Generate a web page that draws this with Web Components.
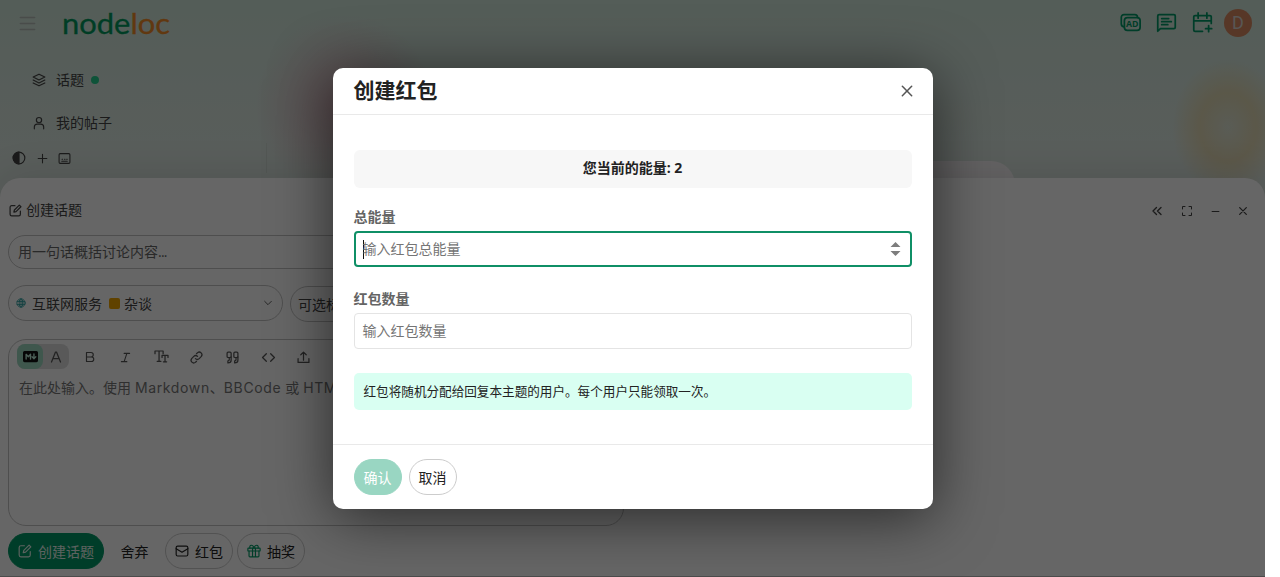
<!DOCTYPE html>
<html lang="zh-CN">
<head>
<meta charset="utf-8">
<title>NodeLoc</title>
<style>
    body {
        margin: 0;
        background: #fff;
        color: #222;
        font-family: "Open Sans", "Noto Sans CJK SC", sans-serif;
        font-size: 14px;
        line-height: 20px;
        overflow: hidden;
    }
</style>
</head>
<body>
<forum-app></forum-app>

<script>
const ICONS = {
    menu: '<path d="M3 4.5h18M3 12h18M3 19.5h18"/>',
    layers: '<path d="m12 2 10 5-10 5L2 7zM2 12l10 5 10-5M2 17l10 5 10-5"/>',
    user: '<circle cx="12" cy="7" r="4.5"/><path d="M4 22v-3a5 5 0 0 1 5-5h6a5 5 0 0 1 5 5v3"/>',
    contrast: '<circle cx="12" cy="12" r="10"/><path d="M12 2a10 10 0 0 0 0 20z" fill="currentColor"/>',
    plus: '<path d="M12 4v16M4 12h16"/>',
    keyboard: '<rect x="2" y="3" width="20" height="18" rx="2"/><path d="M7 17h10M7.500 13.500h1M12 13.500h1M16 13.500h1"/>',
    ad: '<path d="M4.5 17A3.500 3.500 0 0 1 1.500 13.500V6a3 3 0 0 1 3-3H17a3 3 0 0 1 3 3"/><rect x="5" y="6.500" width="18" height="14.500" rx="3.500"/><text x="14" y="17.300" text-anchor="middle" font-size="10" font-weight="700" font-family="Open Sans" fill="currentColor" stroke="none">AD</text>',
    chat: '<path d="M2 22V4.500A1.500 1.500 0 0 1 3.500 3h17A1.500 1.500 0 0 1 22 4.500v13a1.500 1.500 0 0 1-1.500 1.500H5zM6.500 7.500h8M6.500 11h11M6.500 14.500h7"/>',
    calendar: '<path d="M12 22H3.500A1.500 1.500 0 0 1 2 20.500v-15A1.500 1.500 0 0 1 3.500 4h17A1.500 1.500 0 0 1 22 5.500V13M2 10h20M7 1v6M17 1v6M19 15.500v7M15.500 19h7"/>',
    edit: '<path d="M11 3H5a3 3 0 0 0-3 3v13a3 3 0 0 0 3 3h13a3 3 0 0 0 3-3v-6M9 15l1-4L19 2l3 3-9 9z"/>',
    chevrons: '<path d="m11 5-7 7 7 7M20 5l-7 7 7 7"/>',
    expand: '<path d="M3 8V3h5M16 3h5v5M21 16v5h-5M8 21H3v-5"/>',
    minus: '<path d="M3 12h18"/>',
    close: '<path d="m4 4 16 16M20 4 4 20"/>',
    down: '<path d="m4 8 8 8 8-8"/>',
    globe: '<circle cx="12" cy="12" r="10"/><ellipse cx="12" cy="12" rx="4.500" ry="10"/><path d="M3 8.500h18M3 15.500h18M12 2v20"/>',
    markdown: '<rect x="1" y="4" width="22" height="16" rx="1.500" fill="currentColor"/><path stroke="var(--cut)" stroke-width="2.200" d="M5 16V8.500l3.500 4 3.500-4V16M17.500 8v7M14.500 12.500l3 3 3-3"/>',
    letter: '<path d="m3 22 8-20h2l8 20M6 15h12"/>',
    bold: '<path d="M5 3h9a4.500 4.500 0 0 1 0 9H5zM5 12h10a4.500 4.500 0 0 1 0 9H5z"/>',
    italic: '<path d="M9 3h12M3 21h12M15 3 9 21"/>',
    heading: '<path d="M0 5V0h15v5M7.500 0v19M4 19h7M13 12V8h11v4M18.500 8v12M15.500 20h6"/>',
    link: '<path d="M10 14a5 5 0 0 0 7 0l4-4a5 5 0 0 0-7-7l-2 2M14 10a5 5 0 0 0-7 0l-4 4a5 5 0 0 0 7 7l2-2"/>',
    quote: '<rect x="2" y="2" width="7.500" height="10" rx="2"/><rect x="14.500" y="2" width="7.500" height="10" rx="2"/><path d="M9.500 11v6q0 5-6 5v-4q2.500 0 2.500-2v-4M22 11v6q0 5-6 5v-4q2.500 0 2.500-2v-4"/>',
    code: '<path d="m8 5-7 7 7 7M16 5l7 7-7 7"/>',
    upload: '<path d="M12 17V2M7 7l5-5 5 5M2 14v7h20v-7"/>',
    mail: '<rect x="2" y="3.500" width="20" height="17" rx="2.500"/><path d="m2 8 10 6 10-6"/>',
    gift: '<rect x="1.500" y="7" width="21" height="5" rx="1"/><path d="M3.500 12v8.500A1.500 1.500 0 0 0 5 22h14a1.500 1.500 0 0 0 1.500-1.500V12M9.500 7v15M14.500 7v15M12 7C10 0 3.500 1 5 7M12 7c2-7 8.500-6 7 0"/>',
};

class NlIcon extends HTMLElement {
    constructor() {
        super();
        this.attachShadow({ mode: 'open' });
    }

    connectedCallback() {
        const size = this.getAttribute('size') || 14;
        this.shadowRoot.innerHTML = `
            <style>
                :host { display: block; flex: none; width: ${size}px; height: ${size}px; }
                svg { display: block; overflow: visible; }
            </style>
            <svg width="${size}" height="${size}" viewBox="0 0 24 24" fill="none" stroke="currentColor"
                stroke-width="${this.getAttribute('weight') || 2}" stroke-linecap="round" stroke-linejoin="round">
                ${ICONS[this.getAttribute('name')]}
            </svg>
        `;
    }
}

class SiteHeader extends HTMLElement {
    constructor() {
        super();
        this.attachShadow({ mode: 'open' }).innerHTML = `
            <style>
                :host {
                    display: flex;
                    align-items: center;
                    height: 46px;
                    padding: 0 9px 0 18px;
                    color: #009a66;
                }
                .menu { color: #b6bdb9; }
                .logo { margin-left: 25px; flex: 1; height: 46px; }
                .logo svg { display: block; }
                .cell { width: 36px; display: grid; place-items: center; margin-top: -1px; }
                .cell:last-child { margin-top: 0; }
                .avatar {
                    width: 28px;
                    height: 28px;
                    border-radius: 50%;
                    background: #d98a62;
                    color: #dcd6d2;
                    font: 18px/28px Roboto, sans-serif;
                    text-align: center;
                }
            </style>
            <nl-icon class="menu" name="menu" size="19" weight="2"></nl-icon>
            <div class="logo">
                <svg width="110" height="46">
                    <text y="33.500" font-family="Lato" font-size="29" stroke-width=".3" textLength="108" lengthAdjust="spacingAndGlyphs"><tspan fill="#009a5c" stroke="#009a5c">node</tspan><tspan fill="#f28c28" stroke="#f28c28">loc</tspan></text>
                </svg>
            </div>
            <div class="cell"><nl-icon name="ad" size="21"></nl-icon></div>
            <div class="cell"><nl-icon name="chat" size="21"></nl-icon></div>
            <div class="cell"><nl-icon name="calendar" size="21"></nl-icon></div>
            <div class="cell"><span class="avatar">D</span></div>
        `;
    }
}

class SideNav extends HTMLElement {
    constructor() {
        super();
        this.attachShadow({ mode: 'open' }).innerHTML = `
            <style>
                :host { display: block; width: 267px; padding-top: 12px; color: #444; }
                .row { display: flex; align-items: center; gap: 10px; height: 43px; padding-left: 32px; }
                .row nl-icon { margin-top: 1px; }
                .dot { width: 8px; height: 8px; border-radius: 50%; background: #23cf8e; margin-left: -3px; }
                .tools {
                    display: flex;
                    align-items: center;
                    gap: 9.500px;
                    height: 30px;
                    margin-top: -1px;
                    padding: 0 0 0 12px;
                    border-right: 1px solid #d2dcd6;
                }
            </style>
            <div class="row"><nl-icon name="layers"></nl-icon>话题<i class="dot"></i></div>
            <div class="row"><nl-icon name="user"></nl-icon>我的帖子</div>
            <div class="tools">
                <nl-icon name="contrast"></nl-icon>
                <nl-icon name="plus" size="13"></nl-icon>
                <nl-icon name="keyboard" size="13"></nl-icon>
            </div>
        `;
    }
}

class PillButton extends HTMLElement {
    constructor() {
        super();
        this.attachShadow({ mode: 'open' }).innerHTML = `
            <style>
                :host {
                    display: inline-flex;
                    align-items: center;
                    justify-content: center;
                    gap: 6px;
                    box-sizing: border-box;
                    height: 36px;
                    padding: 2px 9px 0;
                    border: 1px solid #ccc;
                    border-radius: 18px;
                    white-space: nowrap;
                }
                :host([kind="primary"]) { background: #009a66; border-color: #009a66; color: #e8f5ef; }
                :host([kind="flat"]) { border-color: transparent; }
                :host([disabled]) { background: #99d6c2; border-color: #99d6c2; color: #fff; }
                ::slotted(nl-icon) { margin-top: -3px; }
            </style>
            <slot></slot>
        `;
    }
}

class EditorToolbar extends HTMLElement {
    constructor() {
        super();
        this.attachShadow({ mode: 'open' }).innerHTML = `
            <style>
                :host { display: flex; align-items: center; height: 25px; color: #555; }
                .toggle { display: flex; width: 52px; height: 25px; border-radius: 8px; background: #dedede; margin-right: 3px; }
                .toggle div { display: grid; place-items: center; width: 26px; }
                .toggle .on { background: #9dd9c1; border-radius: 8px; color: #111; --cut: #bdeeda; }
                .cell { display: grid; place-items: center; width: 35.700px; padding-top: 1px; }
            </style>
            <div class="toggle">
                <div class="on"><nl-icon name="markdown" size="15"></nl-icon></div>
                <div><nl-icon name="letter" size="12" weight="2.5"></nl-icon></div>
            </div>
            ${['bold', 'italic', 'heading', 'link', 'quote', 'code', 'upload'].map((name) => `
                <div class="cell"><nl-icon name="${name}" weight="2.3" size="${{ bold: 12, italic: 11 }[name] || 13}"></nl-icon></div>
            `).join('')}
        `;
    }
}

class TopicComposer extends HTMLElement {
    constructor() {
        super();
        this.attachShadow({ mode: 'open' }).innerHTML = `
            <style>
                :host {
                    display: flex;
                    flex-direction: column;
                    box-sizing: border-box;
                    padding: 0 8px;
                    border-radius: 20px 20px 0 0;
                    border-bottom: 1px solid #bbb;
                    background: #fff;
                    box-shadow: 0 -1px 40px rgba(0, 0, 0, .12);
                    color: #444;
                }
                .bar { display: flex; align-items: center; height: 57px; }
                .title { display: flex; align-items: center; gap: 4px; flex: 1; padding: 7px 0 0 1px; }
                .controls { display: flex; padding: 9px 0 0; }
                .controls div { width: 28px; display: grid; place-items: center; }
                .controls div:first-child { width: 32px; }
                .field { box-sizing: border-box; border: 1px solid #c4c4c4; border-radius: 18px; }
                .subject { width: 616px; height: 34px; padding: 6px 9px; color: #666; }
                .subject span { letter-spacing: -.8px; }
                .selects { display: flex; gap: 7px; margin-top: 16px; height: 37px; width: 616px; }
                .category { display: flex; align-items: center; width: 275px; height: 36px; padding: 1px 9px 0 7px; }
                .category .text { margin: 0 7px 0 6px; }
                .square { width: 11px; height: 11px; border-radius: 2px; background: #f0a500; margin-right: 4px; }
                .category .down { margin-left: auto; margin-top: -2px; }
                .globe { color: #2a9f9f; margin-top: -2px; }
                .tags { flex: 1; height: 36px; margin-top: 1px; padding: 8px 7px; }
                .editor { width: 616px; height: 187px; margin-top: 17px; padding: 4px 8px; }
                .hint { margin: 9px 2px; color: #777; white-space: nowrap; font-family: Inter, "Noto Sans CJK SC", sans-serif; }
                .hint span { letter-spacing: .63px; }
                .actions { display: flex; margin-top: 7px; gap: 4px; color: #222; }
                .actions .discard { width: 53px; }
                .gift { color: #009a66; }
            </style>
            <div class="bar">
                <div class="title"><nl-icon name="edit" size="13" weight="2.3"></nl-icon>创建话题</div>
                <div class="controls">
                    <div><nl-icon name="chevrons" size="12" weight="2.7"></nl-icon></div>
                    <div><nl-icon name="expand" size="12"></nl-icon></div>
                    <div><nl-icon name="minus" size="9" weight="3"></nl-icon></div>
                    <div><nl-icon name="close" size="10" weight="3"></nl-icon></div>
                </div>
            </div>
            <div class="field subject">用一句话概括讨论内容<span>...</span></div>
            <div class="selects">
                <div class="field category">
                    <nl-icon class="globe" name="globe" size="10"></nl-icon><span class="text">互联网服务</span>
                    <i class="square"></i>杂谈
                    <nl-icon class="down" name="down" size="10"></nl-icon>
                </div>
                <div class="field tags">可选标签</div>
            </div>
            <div class="field editor">
                <editor-toolbar></editor-toolbar>
                <div class="hint">在此处输入。使用 <span>Markdown</span>、<span>BBCode</span> 或 <span>HTML</span></div>
            </div>
            <div class="actions">
                <pill-button kind="primary"><nl-icon name="edit"></nl-icon>创建话题</pill-button>
                <pill-button kind="flat" class="discard">舍弃</pill-button>
                <pill-button><nl-icon name="mail"></nl-icon>红包</pill-button>
                <pill-button><nl-icon class="gift" name="gift"></nl-icon>抽奖</pill-button>
            </div>
        `;
    }
}

class NumberField extends HTMLElement {
    constructor() {
        super();
        this.attachShadow({ mode: 'open' });
    }

    connectedCallback() {
        this.shadowRoot.innerHTML = `
            <style>
                :host { display: block; }
                label { display: block; height: 24px; line-height: 20px; font-weight: 700; color: #646464; }
                .box {
                    display: flex;
                    align-items: center;
                    box-sizing: border-box;
                    height: 36px;
                    padding: 0 10px 0 8px;
                    border: 1px solid #e4e4e4;
                    border-radius: 4px;
                    color: #757575;
                }
                .box span { flex: 1; }
                svg { display: none; }
                :host([focused]) .box { border: 2px solid #0f8f66; padding: 0 9px 0 7px; }
                :host([focused]) .box::before { content: ""; width: 1px; height: 19px; margin-right: -1px; background: #111; }
                :host([focused]) svg { display: block; }
            </style>
            <label>${this.getAttribute('label')}</label>
            <div class="box">
                <span>${this.getAttribute('placeholder')}</span>
                <svg width="11" height="14"><path d="M.5 5 5.500 0l5 5zM.5 9l5 5 5-5z" fill="#7d7d7d"/></svg>
            </div>
        `;
    }
}

class ModalDialog extends HTMLElement {
    constructor() {
        super();
        this.attachShadow({ mode: 'open' }).innerHTML = `
            <style>
                :host {
                    display: block;
                    width: 600px;
                    height: 441px;
                    border-radius: 10px;
                    background: #fff;
                    box-shadow: 0 8px 60px rgba(0, 0, 0, .6);
                }
                header {
                    display: flex;
                    align-items: center;
                    justify-content: space-between;
                    box-sizing: border-box;
                    height: 47px;
                    padding: 0 19px 0 21px;
                    border-bottom: 1px solid #e9e9e9;
                }
                h1 { margin: -3px 0 0; font-size: 21px; line-height: 28px; font-weight: 700; }
                header nl-icon { color: #555; }
                .body { height: 329px; box-sizing: border-box; padding: 35px 21px 0; }
                footer { display: flex; gap: 7px; padding: 14px 21px 0; border-top: 1px solid #e9e9e9; }
            </style>
            <header><h1><slot name="title"></slot></h1><nl-icon name="close" weight="2.6" size="14"></nl-icon></header>
            <div class="body"><slot></slot></div>
            <footer><slot name="footer"></slot></footer>
        `;
    }
}

class ForumApp extends HTMLElement {
    constructor() {
        super();
        this.attachShadow({ mode: 'open' }).innerHTML = `
            <style>
                :host {
                    display: block;
                    position: relative;
                    width: 1265px;
                    height: 577px;
                    overflow: hidden;
                    background:
                        radial-gradient(circle at 345px 105px, rgba(230, 150, 170, .55), rgba(225, 165, 180, .35) 45px, transparent 90px),
                        radial-gradient(ellipse 56px 68px at 1228px 127px, rgba(235, 215, 165, .2), rgba(235, 205, 140, .5) 50%, transparent),
                        linear-gradient(#d2e8dc, #dfeae4 160px, #dfe8e3);
                }
                .page { display: flex; }
                .content {
                    flex: none;
                    width: 648px;
                    height: 400px;
                    margin: 115px 0 0 100px;
                    border-radius: 24px;
                    background: #fbf8fa;
                }
                topic-composer { position: absolute; left: 0; right: 0; bottom: 0; height: 399px; }
                .backdrop {
                    position: absolute;
                    inset: 0;
                    display: flex;
                    justify-content: center;
                    align-items: flex-start;
                    padding-top: 68px;
                    background: rgba(0, 0, 0, .6);
                }
                .balance {
                    height: 38px;
                    margin-bottom: 19px;
                    border-radius: 6px;
                    background: #f7f7f7;
                    font-weight: 700;
                    line-height: 35px;
                    text-align: center;
                }
                number-field + number-field { margin-top: 22px; }
                .notice {
                    height: 37px;
                    margin-top: 24px;
                    padding-left: 10px;
                    border-radius: 5px;
                    background: #d9fff2;
                    font-size: 12.600px;
                    line-height: 37px;
                }
            </style>
            <site-header></site-header>
            <div class="page"><side-nav></side-nav><div class="content"></div></div>
            <topic-composer></topic-composer>
            <div class="backdrop">
                <modal-dialog>
                    <span slot="title">创建红包</span>
                    <div class="balance">您当前的能量: 2</div>
                    <number-field focused label="总能量" placeholder="输入红包总能量"></number-field>
                    <number-field label="红包数量" placeholder="输入红包数量"></number-field>
                    <div class="notice">红包将随机分配给回复本主题的用户。每个用户只能领取一次。</div>
                    <pill-button slot="footer" disabled>确认</pill-button>
                    <pill-button slot="footer">取消</pill-button>
                </modal-dialog>
            </div>
        `;
    }
}

customElements.define('nl-icon', NlIcon);
customElements.define('site-header', SiteHeader);
customElements.define('side-nav', SideNav);
customElements.define('pill-button', PillButton);
customElements.define('editor-toolbar', EditorToolbar);
customElements.define('topic-composer', TopicComposer);
customElements.define('number-field', NumberField);
customElements.define('modal-dialog', ModalDialog);
customElements.define('forum-app', ForumApp);
</script>
</body>
</html>
